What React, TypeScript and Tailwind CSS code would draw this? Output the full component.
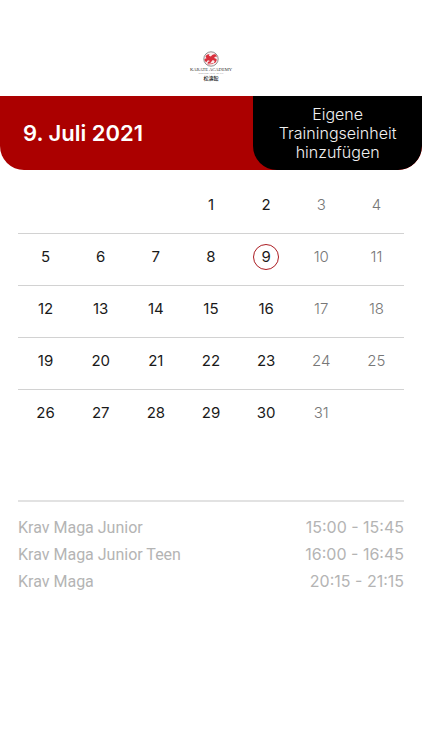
import { useState } from 'react'

/* Kalender Juli 2021, null = leere Zelle */
const weeks: (number | null)[][] = [
  [null, null, null, 1, 2, 3, 4],
  [5, 6, 7, 8, 9, 10, 11],
  [12, 13, 14, 15, 16, 17, 18],
  [19, 20, 21, 22, 23, 24, 25],
  [26, 27, 28, 29, 30, 31, null],
]

const trainings = [
  { name: 'Krav Maga Junior', time: '15:00 - 15:45' },
  { name: 'Krav Maga Junior Teen', time: '16:00 - 16:45' },
  { name: 'Krav Maga', time: '20:15 - 21:15' },
]

function Logo() {
  return (
    <svg width="44" height="34" viewBox="0 0 44 34" role="img" aria-label="Karate Academy">
      <circle cx="22" cy="9" r="7.2" fill="#fbeeee" stroke="#777" strokeWidth="0.8" />
      {/* Tiger */}
      <path
        d="M16.5 6.5c1-2 2.500-2.600 4-2.200l-.6 1.500 2 .8c.8-1.600 2.400-2.800 4.300-2.300 1.200.5 1.800 1.700 1.300 3l-1.400-.9-.9 1.500 2.300 1.200c.5 1.400-.2 2.900-1.500 4l-1.200-.3 1-1.800-2-.9-1.500 1.700c-.6 1.300-2 2.100-3.700 1.600l.3-1.300 1.500-.4.2-1.700-2 .6-1.300 1.600c-1.300-.6-2-1.800-1.800-3.100l2-.9z"
        fill="#d9303c"
      />
      <path
        d="M18 7.500l2 1.200M22.500 8.500l2.500-.8M19.500 11l3-1M24 5.500l1 1.200M18.500 14.200l6-.8"
        fill="none"
        stroke="#d9303c"
        strokeWidth="0.7"
      />
      <text x="22" y="21" textAnchor="middle" fill="#333" fontSize="4.6" fontFamily="'Liberation Serif', serif">
        KARATE ACADEMY
      </text>
      <text x="22" y="24" textAnchor="middle" fill="#666" fontSize="2.6" fontFamily="'Liberation Serif', serif">
        SHOTOKAN KARATE
      </text>
      <text x="22" y="30" textAnchor="middle" fill="#111" fontSize="5" fontWeight="500" fontFamily="'Noto Sans CJK JP', sans-serif">
        松濤館
      </text>
    </svg>
  )
}

export default function App() {
  const [selected, setSelected] = useState(9)

  return (
    <div className="min-h-screen bg-white font-['Inter',sans-serif]">
      <div className="flex h-24 items-end justify-center pb-3">
        <Logo />
      </div>

      <header className="flex h-[74px] overflow-hidden rounded-b-3xl bg-[#ab0000] text-white">
        <h1 className="flex flex-1 items-center pl-[23px] text-[22px] font-semibold">
          {selected}. Juli 2021
        </h1>
        <button type="button" className="w-2/5 rounded-b-3xl bg-black text-base font-light leading-[19px] text-[#f0f0f0]">
          Eigene
          <br />
          Trainingseinheit
          <br />
          hinzufügen
        </button>
      </header>

      <main className="px-[18px] pt-3">
        <table className="w-full table-fixed border-separate border-spacing-0">
          <tbody>
            {weeks.map((week, i) => (
              <tr key={i} className="group">
                {week.map((day, j) => (
                  <td
                    key={j}
                    className="h-[52px] border-b border-[#d2d2d2] p-0 pb-1.5 text-center group-last:border-transparent"
                  >
                    {day && (
                      <button
                        type="button"
                        onClick={() => setSelected(day)}
                        className={`inline-flex size-[26px] items-center justify-center rounded-full border align-middle text-[15px] ${
                          day === selected ? 'border-[#ab1c22]' : 'border-transparent'
                        } ${j > 4 ? 'font-light text-[#777777]' : 'text-[#1a1a1a]'}`}
                      >
                        {day}
                      </button>
                    )}
                  </td>
                ))}
              </tr>
            ))}
          </tbody>
        </table>

        {/* Trainings des gewählten Tages */}
        <ul className="mt-[58px] border-t-2 border-[#e2e2e2] pt-3 text-base leading-[27px] text-[#b4b4b4]">
          {trainings.map((item) => (
            <li key={item.name} className="flex justify-between">
              <span className="font-['Roboto',sans-serif]">{item.name}</span>
              <span>{item.time}</span>
            </li>
          ))}
        </ul>
      </main>
    </div>
  )
}
